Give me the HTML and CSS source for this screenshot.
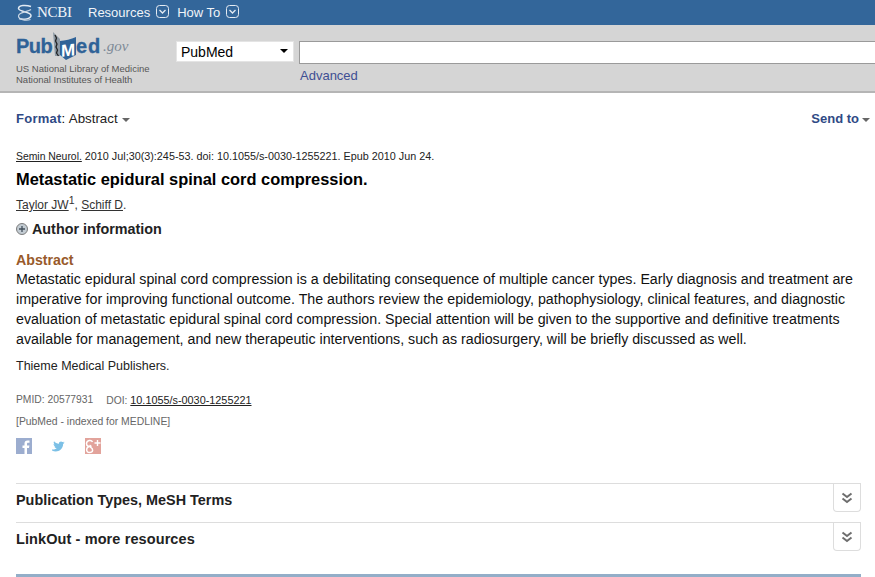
FILE: index.html
```html
<!DOCTYPE html>
<html lang="en">
<head>
<meta charset="utf-8">
<title>Metastatic epidural spinal cord compression - PubMed</title>
<link rel="stylesheet" href="styles.css">
</head>
<body>
<header class="ncbi-bar">
  <a class="ncbi-logo">
    <svg class="helix" width="18" height="18" viewBox="0 0 18 18"><path d="M15 2.500C10 .8 2.500 1 2.500 4.500 2.500 8 15 7.500 15 11.500c0 3.500-7.500 4.500-12 3" fill="none" stroke="#e2eaf3" stroke-width="1.500"/><path d="M15 5.500C12 8 2.500 8 2.500 12c0 3.500 7 5 12 3.500" fill="none" stroke="#c9d6e4" stroke-width="1.200"/></svg>
    <span class="ncbi-text">NCBI</span>
  </a>
  <a class="nav-link">Resources</a>
  <svg class="nav-chev" width="13" height="13" viewBox="0 0 13 13"><rect x=".5" y=".5" width="12" height="12" rx="3" fill="none" stroke="#e4ebf3"/><path d="M3.500 5l3 3 3-3" fill="none" stroke="#e4ebf3" stroke-width="1.300"/></svg>
  <a class="nav-link">How To</a>
  <svg class="nav-chev" width="13" height="13" viewBox="0 0 13 13"><rect x=".5" y=".5" width="12" height="12" rx="3" fill="none" stroke="#e4ebf3"/><path d="M3.500 5l3 3 3-3" fill="none" stroke="#e4ebf3" stroke-width="1.300"/></svg>
</header>

<section class="search-bar">
  <div class="brand">
    <div class="pm-logo">
      <span class="pm-word pm-pub">Pub</span>
      <svg class="pm-book" width="24" height="29" viewBox="0 0 24 29"><path d="M1 0l7 7v17H3z" fill="#8d99a4"/><path d="M3 3l1.500 3-1 3 1.500 3-1 3 1.500 3-1 3 2 3" fill="none" stroke="#222" stroke-width="1.300"/><path d="M8 9c5-.5 11-1.500 16-4v18l-10 5-6-5z" fill="#2f6297"/></svg>
      <span class="pm-m">M</span>
      <span class="pm-word pm-ed">ed</span><span class="pm-gov">.gov</span>
    </div>
    <div class="nlm">US National Library of Medicine<br>National Institutes of Health</div>
  </div>
  <div class="db-select">PubMed<span class="db-arrow"></span></div>
  <div class="term-col">
    <div class="term-input"></div>
    <a class="advanced">Advanced</a>
  </div>
</section>

<main class="content">
  <div class="toolbar">
    <div><span class="fmt-label">Format</span>: <span class="fmt-value">Abstract</span><span class="caret"></span></div>
    <div class="send-to">Send to<span class="caret"></span></div>
  </div>

  <div class="cit"><a class="ul cit-journal">Semin Neurol.</a> 2010 Jul;30(3):245-53. doi: 10.1055/s-0030-1255221. Epub 2010 Jun 24.</div>
  <h1 class="title">Metastatic epidural spinal cord compression.</h1>
  <div class="auths"><a class="ul">Taylor JW</a><sup class="aff">1</sup>, <a class="ul">Schiff D</a>.</div>
  <div class="author-info">
    <svg width="12" height="12" viewBox="0 0 12 12"><circle cx="6" cy="6" r="5.500" fill="#c3ccd3" stroke="#7c7c7c"/><path d="M3 6h6M6 3v6" stroke="#44505c" stroke-width="1.300"/></svg>
    <span>Author information</span>
  </div>

  <h2 class="abs-head">Abstract</h2>
  <p class="abs-text">Metastatic epidural spinal cord compression is a debilitating consequence of multiple cancer types. Early diagnosis and treatment are imperative for improving functional outcome. The authors review the epidemiology, pathophysiology, clinical features, and diagnostic evaluation of metastatic epidural spinal cord compression. Special attention will be given to the supportive and definitive treatments available for management, and new therapeutic interventions, such as radiosurgery, will be briefly discussed as well.</p>
  <p class="copyright">Thieme Medical Publishers.</p>

  <div class="ids"><span>PMID: 20577931</span><span>DOI: <a class="ul doi">10.1055/s-0030-1255221</a></span></div>
  <div class="status">[PubMed - indexed for MEDLINE]</div>

  <div class="share">
    <svg width="16" height="16" viewBox="0 0 16 16"><rect width="16" height="16" fill="#9cadcf"/><path d="M11 16v-6h2l.4-2.500H11V6c0-.8.3-1.200 1.200-1.200h1.300V2.500h-2C9.500 2.500 8.500 3.700 8.500 5.600v1.900H6.500V10h2v6z" fill="#fff"/></svg>
    <svg width="16" height="16" viewBox="0 0 16 16"><path d="M1 12.500c3 1.500 6.500 1 8.500-.8 1.800-1.600 2.700-3.900 2.600-5.700.7-.4 1.200-.9 1.600-1.500-.6.200-1.100.4-1.600.4.600-.4 1-.9 1.200-1.500-.6.300-1.200.6-1.800.7-1.300-1.300-3.800-.4-3.500 1.700C6 5.600 4.200 4.700 3 3.200c-.6 1.200-.3 2.500.7 3.200-.4 0-.8-.1-1.200-.3 0 1.200.8 2.200 2 2.500-.4.100-.8.100-1.100 0 .3 1 1.200 1.700 2.300 1.700-1.200.9-3 1.400-4.700 1.200z" fill="#7cc0e6"/></svg>
    <svg class="share-gp" width="16" height="16" viewBox="0 0 16 16"><rect width="16" height="16" fill="#e2a39b"/><path d="M7.500 4C6.500 1.800 1.800 2 1.500 5.500c-.2 3 3.500 3.700 5 2.200M4.500 8.500C.8 9 .6 14.500 4.500 14.500s4-3.600 1.200-5.200C4.500 8.500 5 7.500 5.500 7" fill="none" stroke="#fff" stroke-width="1.500"/><path d="M9.500 5h6M12.500 2v6" stroke="#fff" stroke-width="1.400"/></svg>
  </div>

  <div class="sections">
    <div class="acc-row">
      <span>Publication Types, MeSH Terms</span>
      <span class="acc-btn"><svg width="12" height="12" viewBox="0 0 12 12"><path d="M1.500 1.500L6 5l4.500-3.500M1.500 6.500L6 10l4.500-3.500" fill="none" stroke="#6e6e6e" stroke-width="2"/></svg></span>
    </div>
    <div class="acc-row">
      <span class="acc-wide">LinkOut - more resources</span>
      <span class="acc-btn"><svg width="12" height="12" viewBox="0 0 12 12"><path d="M1.500 1.500L6 5l4.500-3.500M1.500 6.500L6 10l4.500-3.500" fill="none" stroke="#6e6e6e" stroke-width="2"/></svg></span>
    </div>
  </div>
  <div class="foot-rule"></div>
</main>
</body>
</html>
```
FILE: styles.css
```css
html, body { margin: 0; padding: 0; }
body {
  width: 875px;
  height: 577px;
  overflow: hidden;
  background: #fff;
  color: #000;
  font-family: "Liberation Sans", Arial, sans-serif;
  font-size: 14px;
}
a { color: inherit; }
.ul { text-decoration: underline; }

.ncbi-bar {
  height: 25px;
  background: #33669a;
  color: #f0f4f8;
  display: flex;
  align-items: center;
  padding-left: 16px;
  box-sizing: border-box;
}
.ncbi-logo { display: flex; align-items: center; gap: 3px; width: 72px; flex: none; }
.ncbi-text { font-family: "Liberation Serif", serif; font-size: 15px; letter-spacing: -.3px; }
.nav-link { font-size: 13px; margin-right: 6px; }
.nav-chev { margin-right: 8px; margin-top: -3px; }

.search-bar {
  height: 68px;
  box-sizing: border-box;
  background: #d5d5d5;
  border-bottom: 2px solid #b5b5b5;
  display: flex;
  padding-left: 16px;
}
.brand { width: 160px; flex: none; padding-top: 7px; }
.pm-logo {
  height: 29px;
  display: flex;
  align-items: flex-start;
  position: relative;
  color: #2f6297;
  font-weight: bold;
}
.pm-word { font-size: 20px; line-height: 27px; margin-top: 1px; -webkit-text-stroke: .3px #2f6297; }
.pm-pub { width: 36px; letter-spacing: -.5px; }
.pm-ed { letter-spacing: .8px; }
.pm-book { flex: none; }
.pm-m {
  position: absolute;
  left: 45px;
  top: 11px;
  font-size: 17px;
  line-height: 16px;
  color: #fff;
  transform: skewY(-6deg);
}
.pm-gov {
  font-family: "Liberation Serif", serif;
  font-style: italic;
  font-weight: normal;
  font-size: 15px;
  line-height: 27px;
  margin: 1px 0 0 2px;
  color: #7d8a97;
}
.nlm {
  margin-top: 2px;
  font-size: 9.500px;
  line-height: 11px;
  color: #555;
}
.db-select {
  flex: none;
  width: 118px;
  height: 21px;
  margin-top: 16px;
  box-sizing: border-box;
  background: #fff;
  border: 1px solid #e4e4e4;
  padding-left: 4px;
  font-size: 14px;
  line-height: 20px;
  position: relative;
}
.db-arrow {
  position: absolute;
  right: 5px;
  top: 7px;
  border: 4px solid transparent;
  border-top: 4px solid #000;
  border-bottom: 0;
}
.term-col { margin-left: 5px; flex: 1; min-width: 0; padding-top: 16px; }
.term-input {
  height: 23px;
  box-sizing: border-box;
  background: #fff;
  border: 1px solid #9a9a9a;
  border-right: 0;
}
.advanced { display: block; margin: 3px 0 0 1px; font-size: 13px; line-height: 17px; color: #3f4f93; }

.content { padding: 0 5px 0 16px; }
.toolbar {
  display: flex;
  justify-content: space-between;
  padding-top: 18px;
  font-size: 13px;
  line-height: 16px;
  height: 34px;
  box-sizing: border-box;
  margin-bottom: 23px;
}
.fmt-label { color: #2f4a85; font-weight: bold; letter-spacing: .25px; }
.fmt-value { color: #222; font-size: 13.300px; }
.send-to { color: #2f4a85; font-weight: bold; font-size: 13px; }
.caret {
  display: inline-block;
  margin-left: 4px;
  vertical-align: middle;
  border: 4px solid transparent;
  border-top: 4px solid #666;
  border-bottom: 0;
}
.send-to .caret { margin-left: 3px; }
.cit { font-size: 10.800px; line-height: 13px; color: #222; }
.cit-journal { font-size: 10.400px; }
.title { margin: 6px 0 0; font-size: 16.400px; line-height: 20px; font-weight: bold; }
.auths { margin-top: 7px; font-size: 12px; line-height: 18px; color: #333; }
.aff { font-size: 10.500px; line-height: 0; }
.author-info {
  margin-top: 6px;
  display: flex;
  align-items: center;
  gap: 4px;
  font-size: 14.350px;
  font-weight: bold;
  line-height: 18px;
  color: #222;
}
.abs-head { margin: 14px 0 1px; font-size: 14.200px; line-height: 16px; font-weight: bold; color: #985a2a; }
.abs-text { margin: 0; width: 845px; font-size: 14.220px; line-height: 20px; color: #111; }
.copyright { margin: 9px 0 0; font-size: 12.500px; line-height: 16px; color: #222; }
.ids { margin-top: 19px; display: flex; gap: 13px; font-size: 10.300px; line-height: 14px; color: #666; }
.doi { color: #222; font-size: 10.850px; }
.status { margin-top: 7px; font-size: 10.400px; line-height: 14px; color: #666; }
.share { margin-top: 9px; display: flex; gap: 19px; height: 16px; }
.share-gp { margin-left: -1px; }
.sections { margin-top: 29px; width: 845px; }
.acc-row {
  height: 39px;
  box-sizing: border-box;
  border-top: 1px solid #ddd;
  display: flex;
  justify-content: space-between;
  align-items: flex-start;
  font-size: 14.400px;
  font-weight: bold;
  line-height: 32px;
  color: #222;
}
.acc-wide { letter-spacing: .1px; font-size: 14.500px; }
.acc-btn {
  width: 28px;
  height: 28px;
  box-sizing: border-box;
  border: 1px solid #ddd;
  border-top: 0;
  border-radius: 0 0 4px 4px;
  display: flex;
  align-items: center;
  justify-content: center;
}
.foot-rule { margin-top: 13px; width: 845px; height: 3px; background: #93aec8; }
```
